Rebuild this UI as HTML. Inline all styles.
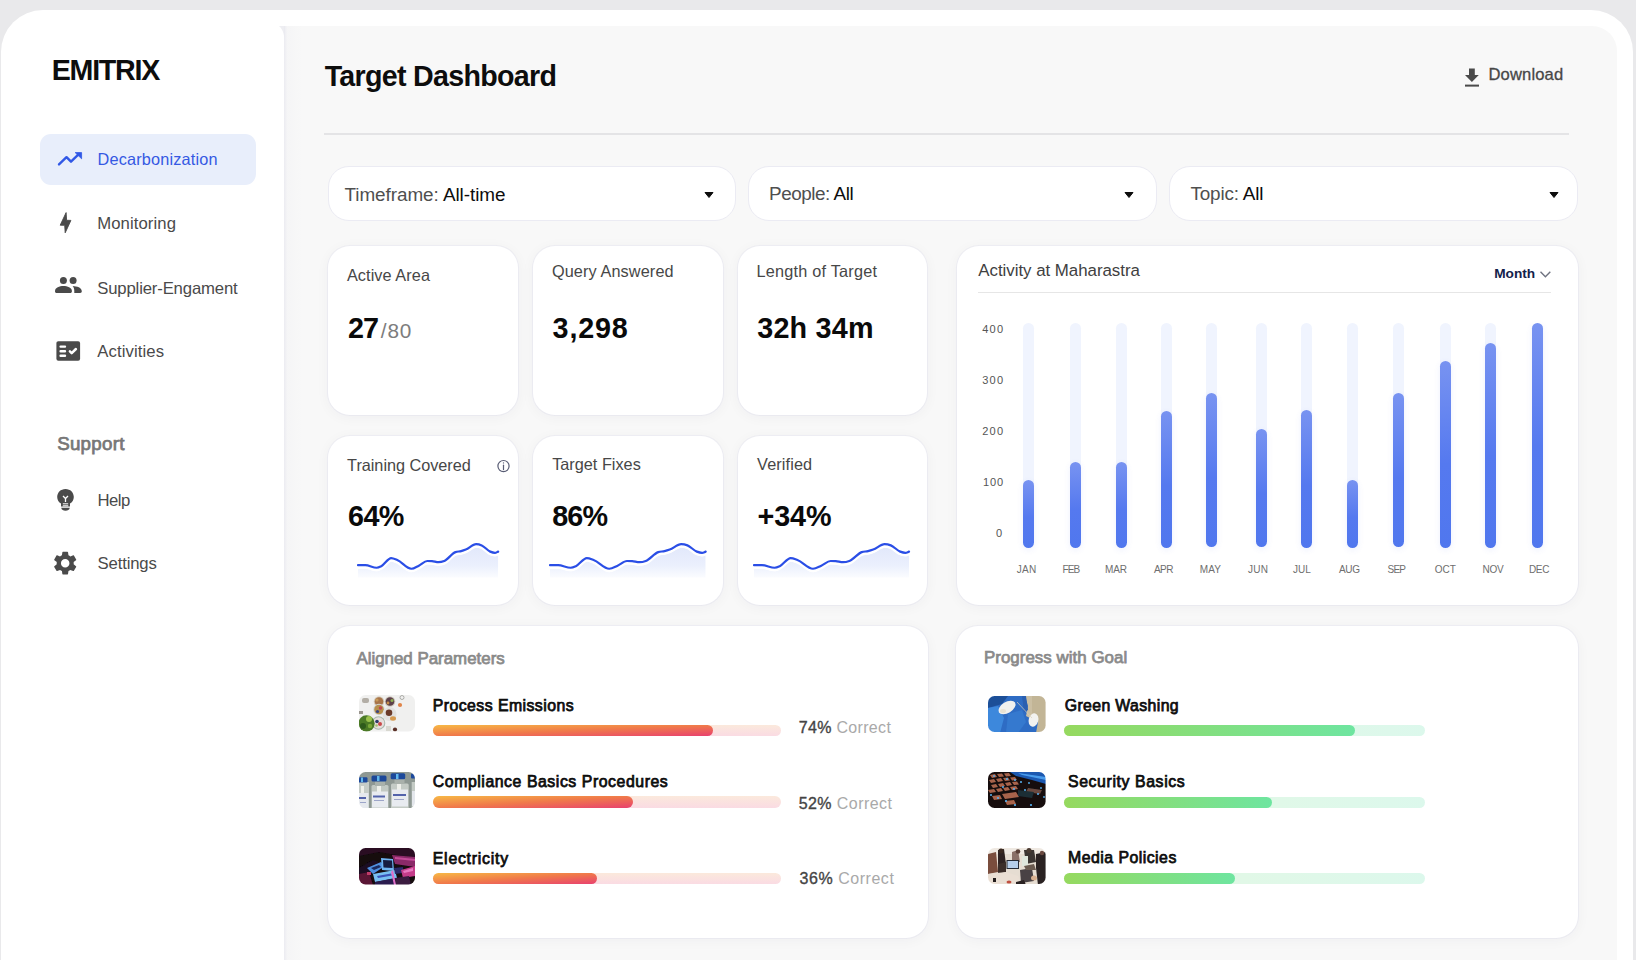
<!DOCTYPE html>
<html><head><meta charset="utf-8"><title>Target Dashboard</title>
<style>
html,body{margin:0;padding:0;}
body{width:1636px;height:960px;overflow:hidden;position:relative;background:#e9e9eb;font-family:"Liberation Sans",sans-serif;}
.t{position:absolute;white-space:nowrap;}
.b{position:absolute;}
.i{position:absolute;display:block;}
</style></head><body>
<div class="b" style="left:1px;top:10px;width:1632px;height:990px;background:#fff;border-radius:42px 42px 0 0;"></div>
<div class="b" style="left:284px;top:26px;width:1333px;height:974px;background:#f8f8f8;border-radius:0 25px 0 0;"></div>
<svg class="i" style="left:276px;top:26px" width="10" height="16" viewBox="276 26 10 16"><path d="M278.8 26 H284.5 V41 C284.3 34 282.5 28.5 278.8 26 Z" fill="#eeeef2"/></svg>
<div class="b" style="left:284px;top:26px;width:18px;height:974px;background:linear-gradient(90deg,rgba(230,230,238,0.7),rgba(240,240,243,0.35) 18%,rgba(248,248,248,0));"></div>
<div class="t" style="left:51.70px;top:54px;font-size:28.63px;line-height:32px;font-weight:700;color:#0d0d0d;letter-spacing:-1.250px;">EMITRIX</div>
<div class="b" style="left:40px;top:134px;width:216px;height:51px;background:#e8eefb;border-radius:11px;"></div>
<div class="t" style="left:97.50px;top:150px;font-size:16.28px;line-height:18px;font-weight:400;color:#3559e3;letter-spacing:0.179px;">Decarbonization</div>
<div class="t" style="left:97.20px;top:214px;font-size:16.72px;line-height:19px;font-weight:400;color:#4a4a4a;letter-spacing:0.083px;">Monitoring</div>
<div class="t" style="left:97.20px;top:279px;font-size:16.72px;line-height:19px;font-weight:400;color:#4a4a4a;letter-spacing:-0.156px;">Supplier-Engament</div>
<div class="t" style="left:97.20px;top:342px;font-size:16.72px;line-height:19px;font-weight:400;color:#4a4a4a;letter-spacing:0.111px;">Activities</div>
<div class="t" style="left:57.20px;top:433px;font-size:18.75px;line-height:21px;font-weight:400;color:#777777;letter-spacing:0.250px;-webkit-text-stroke:0.75px #777777;">Support</div>
<div class="t" style="left:97.50px;top:491px;font-size:16.72px;line-height:19px;font-weight:400;color:#4a4a4a;letter-spacing:-0.500px;">Help</div>
<div class="t" style="left:97.50px;top:554px;font-size:16.72px;line-height:19px;font-weight:400;color:#4a4a4a;letter-spacing:-0.143px;">Settings</div>
<svg class="i" style="left:50px;top:140px" width="40" height="40" viewBox="50 140 40 40"><path d="M59 164.4 L66.5 157.2 L71 161.7 L79 153.9" stroke="#3158e6" stroke-width="2.4" fill="none" stroke-linecap="round" stroke-linejoin="round"/><path d="M75.2 152.6 H81.6 V158.8 Z" fill="#3158e6" stroke="#3158e6" stroke-width="0.8" stroke-linejoin="round"/></svg>
<svg class="i" style="left:54px;top:208px" width="24" height="30" viewBox="54 208 24 30"><path d="M66.1 212.6 L66.6 220.3 L70.9 220.4 L65.2 232.8 L64.7 225.3 L60.2 225.2 Z" fill="#4a4a4a" stroke="#4a4a4a" stroke-width="0.9" stroke-linejoin="round"/></svg>
<svg class="i" style="left:52px;top:272px" width="34" height="26" viewBox="52 272 34 26"><circle cx="63.4" cy="280.4" r="3.5" fill="#4a4a4a"/><circle cx="73.1" cy="280.4" r="3.5" fill="#4a4a4a"/><path d="M55 291 C55 287.8 59.5 286.1 63.4 286.1 C67.3 286.1 71.9 287.8 71.9 291 V291.4 C71.9 292.3 71.2 292.9 70.3 292.9 H56.6 C55.7 292.9 55 292.3 55 291.4 Z" fill="#4a4a4a"/><path d="M72.6 286.1 C77 286.3 81.8 287.8 81.8 291.2 C81.8 292.2 81.2 292.9 80.2 292.9 H74.3 V291 C74.3 289 73.8 287.3 72.6 286.1 Z" fill="#4a4a4a"/></svg>
<svg class="i" style="left:52px;top:336px" width="34" height="30" viewBox="52 336 34 30"><rect x="56.4" y="341.2" width="23.7" height="19.5" rx="1.9" fill="#4a4a4a"/><path d="M60.6 346.6 H65 M60.6 351.2 H65 M60.6 355.7 H65" stroke="#fff" stroke-width="2.4" stroke-linecap="round"/><path d="M69.9 351.4 L71.7 353.1 L75.9 349" stroke="#fff" stroke-width="2.5" fill="none" stroke-linecap="round" stroke-linejoin="round"/></svg>
<svg class="i" style="left:56px;top:488px" width="19" height="24" viewBox="0 0 19 24"><path d="M9.5 1 C4.6 1 1.2 4.6 1.2 9 C1.2 12 2.8 14.3 5 15.6 V18.6 H14 V15.6 C16.2 14.3 17.8 12 17.8 9 C17.8 4.6 14.4 1 9.5 1 Z" fill="#4a4a4a"/><path d="M5.2 19.8 H13.8 C13.5 21.8 11.8 22.8 9.5 22.8 C7.2 22.8 5.5 21.8 5.2 19.8Z" fill="#4a4a4a"/><path d="M7 8 L9.5 10.5 L12 8 M9.5 10.5 V14" stroke="#fff" stroke-width="1.3" fill="none"/><rect x="6.8" y="15.3" width="5.4" height="1" fill="#fff"/><rect x="6.8" y="17.3" width="5.4" height="1" fill="#fff"/></svg>
<svg class="i" style="left:51.3px;top:549px" width="28.4" height="28.4" viewBox="0 0 24 24"><path fill="#4a4a4a" d="M19.14 12.94c.04-.3.06-.61.06-.94 0-.32-.02-.64-.07-.94l2.03-1.58a.49.49 0 0 0 .12-.61l-1.92-3.32a.488.488 0 0 0-.59-.22l-2.39.96c-.5-.38-1.03-.7-1.62-.94l-.36-2.54a.484.484 0 0 0-.48-.41h-3.84c-.24 0-.43.17-.47.41l-.36 2.54c-.59.24-1.13.57-1.62.94l-2.39-.96c-.22-.08-.47 0-.59.22L2.74 8.87c-.12.21-.08.47.12.61l2.03 1.58c-.05.3-.09.63-.09.94s.02.64.07.94l-2.03 1.58a.49.49 0 0 0-.12.61l1.92 3.32c.12.22.37.29.59.22l2.39-.96c.5.38 1.03.7 1.62.94l.36 2.54c.05.24.24.41.48.41h3.84c.24 0 .44-.17.47-.41l.36-2.54c.59-.24 1.13-.56 1.62-.94l2.39.96c.22.08.47 0 .59-.22l1.92-3.32c.12-.22.07-.47-.12-.61l-2.01-1.58zM12 15.6c-1.98 0-3.6-1.62-3.6-3.6s1.62-3.6 3.6-3.6 3.6 1.62 3.6 3.6-1.62 3.6-3.6 3.6z"/></svg>
<div class="t" style="left:324.70px;top:60px;font-size:28.63px;line-height:32px;font-weight:700;color:#0d0d0d;letter-spacing:-0.700px;">Target Dashboard</div>
<svg class="i" style="left:1463px;top:67px" width="18" height="21" viewBox="0 0 18 21"><path d="M6 1.5 H11.8 V8 H15.8 L8.9 15 L2 8 H6 Z" fill="#4a4a4a"/><rect x="2" y="17.6" width="14" height="2" fill="#4a4a4a"/></svg>
<div class="t" style="left:1488.50px;top:65px;font-size:16.57px;line-height:19px;font-weight:400;color:#474747;letter-spacing:0.136px;-webkit-text-stroke:0.3px #474747;">Download</div>
<div class="b" style="left:324px;top:133px;width:1245px;height:2px;background:#e4e4e6;"></div>
<div class="b" style="left:327.5px;top:166.4px;width:408.5px;height:54.19999999999999px;background:#fff;border:1px solid #ebebf3;border-radius:21px;box-sizing:border-box;"></div>
<div class="b" style="left:748.3px;top:166.4px;width:408.5px;height:54.19999999999999px;background:#fff;border:1px solid #ebebf3;border-radius:21px;box-sizing:border-box;"></div>
<div class="b" style="left:1169.4px;top:166.4px;width:408.5999999999999px;height:54.19999999999999px;background:#fff;border:1px solid #ebebf3;border-radius:21px;box-sizing:border-box;"></div>
<div class="t" style="left:344.50px;top:184px;font-size:18.90px;line-height:21px;letter-spacing:-0.056px"><span style="color:#4f4f4f;font-weight:400">Timeframe: </span><span style="color:#0d0d0d;font-weight:400">All-time</span></div>
<div class="t" style="left:769.10px;top:183px;font-size:18.90px;line-height:21px;letter-spacing:-0.475px"><span style="color:#4f4f4f;font-weight:400">People: </span><span style="color:#0d0d0d;font-weight:400">All</span></div>
<div class="t" style="left:1190.50px;top:183px;font-size:18.90px;line-height:21px;letter-spacing:-0.189px"><span style="color:#4f4f4f;font-weight:400">Topic: </span><span style="color:#0d0d0d;font-weight:400">All</span></div>
<svg class="i" style="left:704px;top:191px" width="10" height="8" viewBox="0 0 10 8"><path d="M1 1.5 H9 L5 6.5 Z" fill="#0d0d0d" stroke="#0d0d0d" stroke-width="1" stroke-linejoin="round"/></svg>
<svg class="i" style="left:1124.2px;top:191px" width="10" height="8" viewBox="0 0 10 8"><path d="M1 1.5 H9 L5 6.5 Z" fill="#0d0d0d" stroke="#0d0d0d" stroke-width="1" stroke-linejoin="round"/></svg>
<svg class="i" style="left:1549.3px;top:191px" width="10" height="8" viewBox="0 0 10 8"><path d="M1 1.5 H9 L5 6.5 Z" fill="#0d0d0d" stroke="#0d0d0d" stroke-width="1" stroke-linejoin="round"/></svg>
<div class="b" style="left:328px;top:246px;width:190px;height:168.5px;background:#fff;border-radius:22px;box-shadow:0 2px 14px rgba(30,30,60,0.045),0 0 0 1px rgba(225,225,240,0.38);"></div>
<div class="b" style="left:328px;top:436px;width:190px;height:168.5px;background:#fff;border-radius:22px;box-shadow:0 2px 14px rgba(30,30,60,0.045),0 0 0 1px rgba(225,225,240,0.38);"></div>
<div class="b" style="left:533px;top:246px;width:190px;height:168.5px;background:#fff;border-radius:22px;box-shadow:0 2px 14px rgba(30,30,60,0.045),0 0 0 1px rgba(225,225,240,0.38);"></div>
<div class="b" style="left:533px;top:436px;width:190px;height:168.5px;background:#fff;border-radius:22px;box-shadow:0 2px 14px rgba(30,30,60,0.045),0 0 0 1px rgba(225,225,240,0.38);"></div>
<div class="b" style="left:738px;top:246px;width:189px;height:168.5px;background:#fff;border-radius:22px;box-shadow:0 2px 14px rgba(30,30,60,0.045),0 0 0 1px rgba(225,225,240,0.38);"></div>
<div class="b" style="left:738px;top:436px;width:189px;height:168.5px;background:#fff;border-radius:22px;box-shadow:0 2px 14px rgba(30,30,60,0.045),0 0 0 1px rgba(225,225,240,0.38);"></div>
<div class="b" style="left:957px;top:246px;width:621px;height:358.5px;background:#fff;border-radius:22px;box-shadow:0 2px 14px rgba(30,30,60,0.045),0 0 0 1px rgba(225,225,240,0.38);"></div>
<div class="b" style="left:328px;top:626px;width:600px;height:312px;background:#fff;border-radius:22px;box-shadow:0 2px 14px rgba(30,30,60,0.045),0 0 0 1px rgba(225,225,240,0.38);"></div>
<div class="b" style="left:956px;top:626px;width:622px;height:312px;background:#fff;border-radius:22px;box-shadow:0 2px 14px rgba(30,30,60,0.045),0 0 0 1px rgba(225,225,240,0.38);"></div>
<div class="t" style="left:346.90px;top:266px;font-size:16.28px;line-height:18px;font-weight:400;color:#474747;letter-spacing:0.080px;">Active Area</div>
<div class="t" style="left:551.90px;top:262px;font-size:16.28px;line-height:18px;font-weight:400;color:#474747;letter-spacing:0.112px;">Query Answered</div>
<div class="t" style="left:756.40px;top:262px;font-size:16.28px;line-height:18px;font-weight:400;color:#474747;letter-spacing:0.223px;">Length of Target</div>
<div class="t" style="left:348.10px;top:312px;font-size:28.78px;line-height:32px;font-weight:700;color:#0a0a0a;letter-spacing:-1.000px;">27</div>
<div class="t" style="left:380.70px;top:319px;font-size:20.79px;line-height:23px;font-weight:400;color:#7d7d7d;letter-spacing:0.925px;">/80</div>
<div class="t" style="left:552.60px;top:312px;font-size:28.78px;line-height:32px;font-weight:700;color:#0a0a0a;letter-spacing:0.800px;">3,298</div>
<div class="t" style="left:757.20px;top:312px;font-size:28.78px;line-height:32px;font-weight:700;color:#0a0a0a;letter-spacing:0.200px;">32h 34m</div>
<div class="t" style="left:347.10px;top:456px;font-size:16.28px;line-height:18px;font-weight:400;color:#474747;letter-spacing:-0.033px;">Training Covered</div>
<div class="t" style="left:552.20px;top:455px;font-size:16.28px;line-height:18px;font-weight:400;color:#474747;letter-spacing:0.000px;">Target Fixes</div>
<div class="t" style="left:757.10px;top:455px;font-size:16.28px;line-height:18px;font-weight:400;color:#474747;letter-spacing:0.107px;">Verified</div>
<div class="t" style="left:348.10px;top:500px;font-size:28.78px;line-height:32px;font-weight:700;color:#0a0a0a;letter-spacing:-0.700px;">64%</div>
<div class="t" style="left:552.20px;top:500px;font-size:28.78px;line-height:32px;font-weight:700;color:#0a0a0a;letter-spacing:-0.850px;">86%</div>
<div class="t" style="left:757.60px;top:500px;font-size:28.78px;line-height:32px;font-weight:700;color:#0a0a0a;letter-spacing:-0.150px;">+34%</div>
<svg class="i" style="left:490px;top:452px" width="26" height="26" viewBox="490 452 26 26"><circle cx="503.5" cy="466.1" r="5.6" stroke="#585c74" stroke-width="1.2" fill="none"/><path d="M503.5 465.2 V469.6" stroke="#585c74" stroke-width="1.2" stroke-linecap="round"/><circle cx="503.5" cy="462.9" r="0.7" fill="#585c74"/></svg>
<svg class="i" style="left:357.5px;top:530px;overflow:visible" width="140.2" height="50" viewBox="0 0 155.13 50" preserveAspectRatio="none"><defs><linearGradient id="sg357" gradientUnits="userSpaceOnUse" x1="0" y1="14" x2="0" y2="47"><stop offset="0" stop-color="#e2e8fb"/><stop offset="0.55" stop-color="#ebf0fd"/><stop offset="1" stop-color="#ffffff"/></linearGradient><clipPath id="cpsg357"><rect x="0" y="0" width="155.13" height="47.5"/></clipPath></defs><g clip-path="url(#cpsg357)"><path d="M0.00 35.13 C2.70 35.13 5.40 35.13 8.10 35.13 C12.26 35.13 16.42 37.73 20.57 37.73 C22.31 37.73 24.04 36.94 25.77 36.17 C29.41 34.56 33.04 28.07 36.68 28.07 C38.93 28.07 41.18 29.12 43.43 29.94 C48.63 31.83 53.82 38.77 59.02 38.77 C61.79 38.77 64.56 36.85 67.33 35.65 C70.45 34.30 73.57 30.98 76.68 30.98 C78.42 30.98 80.15 31.05 81.88 31.18 C84.30 31.38 86.73 32.22 89.15 32.22 C91.23 32.22 93.31 31.74 95.39 30.98 C99.54 29.44 103.70 23.53 107.86 22.14 C109.93 21.45 112.01 21.60 114.09 21.11 C115.82 20.69 117.55 20.16 119.29 19.55 C123.10 18.20 126.90 14.14 130.71 14.14 C132.79 14.14 134.87 14.59 136.95 15.39 C140.07 16.60 143.18 20.40 146.30 21.63 C148.03 22.30 149.76 22.87 151.50 22.87 C152.71 22.87 153.92 22.04 155.13 21.63 L155.13 60 L0 60 Z" fill="url(#sg357)" transform="translate(0,3.5)"/></g><path d="M0.00 35.13 C2.70 35.13 5.40 35.13 8.10 35.13 C12.26 35.13 16.42 37.73 20.57 37.73 C22.31 37.73 24.04 36.94 25.77 36.17 C29.41 34.56 33.04 28.07 36.68 28.07 C38.93 28.07 41.18 29.12 43.43 29.94 C48.63 31.83 53.82 38.77 59.02 38.77 C61.79 38.77 64.56 36.85 67.33 35.65 C70.45 34.30 73.57 30.98 76.68 30.98 C78.42 30.98 80.15 31.05 81.88 31.18 C84.30 31.38 86.73 32.22 89.15 32.22 C91.23 32.22 93.31 31.74 95.39 30.98 C99.54 29.44 103.70 23.53 107.86 22.14 C109.93 21.45 112.01 21.60 114.09 21.11 C115.82 20.69 117.55 20.16 119.29 19.55 C123.10 18.20 126.90 14.14 130.71 14.14 C132.79 14.14 134.87 14.59 136.95 15.39 C140.07 16.60 143.18 20.40 146.30 21.63 C148.03 22.30 149.76 22.87 151.50 22.87 C152.71 22.87 153.92 22.04 155.13 21.63" stroke="#fff" stroke-width="4.2" fill="none" transform="translate(0,1.5)" vector-effect="non-scaling-stroke"/><path d="M0.00 35.13 C2.70 35.13 5.40 35.13 8.10 35.13 C12.26 35.13 16.42 37.73 20.57 37.73 C22.31 37.73 24.04 36.94 25.77 36.17 C29.41 34.56 33.04 28.07 36.68 28.07 C38.93 28.07 41.18 29.12 43.43 29.94 C48.63 31.83 53.82 38.77 59.02 38.77 C61.79 38.77 64.56 36.85 67.33 35.65 C70.45 34.30 73.57 30.98 76.68 30.98 C78.42 30.98 80.15 31.05 81.88 31.18 C84.30 31.38 86.73 32.22 89.15 32.22 C91.23 32.22 93.31 31.74 95.39 30.98 C99.54 29.44 103.70 23.53 107.86 22.14 C109.93 21.45 112.01 21.60 114.09 21.11 C115.82 20.69 117.55 20.16 119.29 19.55 C123.10 18.20 126.90 14.14 130.71 14.14 C132.79 14.14 134.87 14.59 136.95 15.39 C140.07 16.60 143.18 20.40 146.30 21.63 C148.03 22.30 149.76 22.87 151.50 22.87 C152.71 22.87 153.92 22.04 155.13 21.63" stroke="#2a4ee6" stroke-width="2.2" fill="none" stroke-linecap="round" vector-effect="non-scaling-stroke"/></svg>
<svg class="i" style="left:550px;top:530px;overflow:visible" width="155.7" height="50" viewBox="0 0 155.13 50" preserveAspectRatio="none"><defs><linearGradient id="sg550" gradientUnits="userSpaceOnUse" x1="0" y1="14" x2="0" y2="47"><stop offset="0" stop-color="#e2e8fb"/><stop offset="0.55" stop-color="#ebf0fd"/><stop offset="1" stop-color="#ffffff"/></linearGradient><clipPath id="cpsg550"><rect x="0" y="0" width="155.13" height="47.5"/></clipPath></defs><g clip-path="url(#cpsg550)"><path d="M0.00 35.13 C2.70 35.13 5.40 35.13 8.10 35.13 C12.26 35.13 16.42 37.73 20.57 37.73 C22.31 37.73 24.04 36.94 25.77 36.17 C29.41 34.56 33.04 28.07 36.68 28.07 C38.93 28.07 41.18 29.12 43.43 29.94 C48.63 31.83 53.82 38.77 59.02 38.77 C61.79 38.77 64.56 36.85 67.33 35.65 C70.45 34.30 73.57 30.98 76.68 30.98 C78.42 30.98 80.15 31.05 81.88 31.18 C84.30 31.38 86.73 32.22 89.15 32.22 C91.23 32.22 93.31 31.74 95.39 30.98 C99.54 29.44 103.70 23.53 107.86 22.14 C109.93 21.45 112.01 21.60 114.09 21.11 C115.82 20.69 117.55 20.16 119.29 19.55 C123.10 18.20 126.90 14.14 130.71 14.14 C132.79 14.14 134.87 14.59 136.95 15.39 C140.07 16.60 143.18 20.40 146.30 21.63 C148.03 22.30 149.76 22.87 151.50 22.87 C152.71 22.87 153.92 22.04 155.13 21.63 L155.13 60 L0 60 Z" fill="url(#sg550)" transform="translate(0,3.5)"/></g><path d="M0.00 35.13 C2.70 35.13 5.40 35.13 8.10 35.13 C12.26 35.13 16.42 37.73 20.57 37.73 C22.31 37.73 24.04 36.94 25.77 36.17 C29.41 34.56 33.04 28.07 36.68 28.07 C38.93 28.07 41.18 29.12 43.43 29.94 C48.63 31.83 53.82 38.77 59.02 38.77 C61.79 38.77 64.56 36.85 67.33 35.65 C70.45 34.30 73.57 30.98 76.68 30.98 C78.42 30.98 80.15 31.05 81.88 31.18 C84.30 31.38 86.73 32.22 89.15 32.22 C91.23 32.22 93.31 31.74 95.39 30.98 C99.54 29.44 103.70 23.53 107.86 22.14 C109.93 21.45 112.01 21.60 114.09 21.11 C115.82 20.69 117.55 20.16 119.29 19.55 C123.10 18.20 126.90 14.14 130.71 14.14 C132.79 14.14 134.87 14.59 136.95 15.39 C140.07 16.60 143.18 20.40 146.30 21.63 C148.03 22.30 149.76 22.87 151.50 22.87 C152.71 22.87 153.92 22.04 155.13 21.63" stroke="#fff" stroke-width="4.2" fill="none" transform="translate(0,1.5)" vector-effect="non-scaling-stroke"/><path d="M0.00 35.13 C2.70 35.13 5.40 35.13 8.10 35.13 C12.26 35.13 16.42 37.73 20.57 37.73 C22.31 37.73 24.04 36.94 25.77 36.17 C29.41 34.56 33.04 28.07 36.68 28.07 C38.93 28.07 41.18 29.12 43.43 29.94 C48.63 31.83 53.82 38.77 59.02 38.77 C61.79 38.77 64.56 36.85 67.33 35.65 C70.45 34.30 73.57 30.98 76.68 30.98 C78.42 30.98 80.15 31.05 81.88 31.18 C84.30 31.38 86.73 32.22 89.15 32.22 C91.23 32.22 93.31 31.74 95.39 30.98 C99.54 29.44 103.70 23.53 107.86 22.14 C109.93 21.45 112.01 21.60 114.09 21.11 C115.82 20.69 117.55 20.16 119.29 19.55 C123.10 18.20 126.90 14.14 130.71 14.14 C132.79 14.14 134.87 14.59 136.95 15.39 C140.07 16.60 143.18 20.40 146.30 21.63 C148.03 22.30 149.76 22.87 151.50 22.87 C152.71 22.87 153.92 22.04 155.13 21.63" stroke="#2a4ee6" stroke-width="2.2" fill="none" stroke-linecap="round" vector-effect="non-scaling-stroke"/></svg>
<svg class="i" style="left:754px;top:530px;overflow:visible" width="155" height="50" viewBox="0 0 155.13 50" preserveAspectRatio="none"><defs><linearGradient id="sg754" gradientUnits="userSpaceOnUse" x1="0" y1="14" x2="0" y2="47"><stop offset="0" stop-color="#e2e8fb"/><stop offset="0.55" stop-color="#ebf0fd"/><stop offset="1" stop-color="#ffffff"/></linearGradient><clipPath id="cpsg754"><rect x="0" y="0" width="155.13" height="47.5"/></clipPath></defs><g clip-path="url(#cpsg754)"><path d="M0.00 35.13 C2.70 35.13 5.40 35.13 8.10 35.13 C12.26 35.13 16.42 37.73 20.57 37.73 C22.31 37.73 24.04 36.94 25.77 36.17 C29.41 34.56 33.04 28.07 36.68 28.07 C38.93 28.07 41.18 29.12 43.43 29.94 C48.63 31.83 53.82 38.77 59.02 38.77 C61.79 38.77 64.56 36.85 67.33 35.65 C70.45 34.30 73.57 30.98 76.68 30.98 C78.42 30.98 80.15 31.05 81.88 31.18 C84.30 31.38 86.73 32.22 89.15 32.22 C91.23 32.22 93.31 31.74 95.39 30.98 C99.54 29.44 103.70 23.53 107.86 22.14 C109.93 21.45 112.01 21.60 114.09 21.11 C115.82 20.69 117.55 20.16 119.29 19.55 C123.10 18.20 126.90 14.14 130.71 14.14 C132.79 14.14 134.87 14.59 136.95 15.39 C140.07 16.60 143.18 20.40 146.30 21.63 C148.03 22.30 149.76 22.87 151.50 22.87 C152.71 22.87 153.92 22.04 155.13 21.63 L155.13 60 L0 60 Z" fill="url(#sg754)" transform="translate(0,3.5)"/></g><path d="M0.00 35.13 C2.70 35.13 5.40 35.13 8.10 35.13 C12.26 35.13 16.42 37.73 20.57 37.73 C22.31 37.73 24.04 36.94 25.77 36.17 C29.41 34.56 33.04 28.07 36.68 28.07 C38.93 28.07 41.18 29.12 43.43 29.94 C48.63 31.83 53.82 38.77 59.02 38.77 C61.79 38.77 64.56 36.85 67.33 35.65 C70.45 34.30 73.57 30.98 76.68 30.98 C78.42 30.98 80.15 31.05 81.88 31.18 C84.30 31.38 86.73 32.22 89.15 32.22 C91.23 32.22 93.31 31.74 95.39 30.98 C99.54 29.44 103.70 23.53 107.86 22.14 C109.93 21.45 112.01 21.60 114.09 21.11 C115.82 20.69 117.55 20.16 119.29 19.55 C123.10 18.20 126.90 14.14 130.71 14.14 C132.79 14.14 134.87 14.59 136.95 15.39 C140.07 16.60 143.18 20.40 146.30 21.63 C148.03 22.30 149.76 22.87 151.50 22.87 C152.71 22.87 153.92 22.04 155.13 21.63" stroke="#fff" stroke-width="4.2" fill="none" transform="translate(0,1.5)" vector-effect="non-scaling-stroke"/><path d="M0.00 35.13 C2.70 35.13 5.40 35.13 8.10 35.13 C12.26 35.13 16.42 37.73 20.57 37.73 C22.31 37.73 24.04 36.94 25.77 36.17 C29.41 34.56 33.04 28.07 36.68 28.07 C38.93 28.07 41.18 29.12 43.43 29.94 C48.63 31.83 53.82 38.77 59.02 38.77 C61.79 38.77 64.56 36.85 67.33 35.65 C70.45 34.30 73.57 30.98 76.68 30.98 C78.42 30.98 80.15 31.05 81.88 31.18 C84.30 31.38 86.73 32.22 89.15 32.22 C91.23 32.22 93.31 31.74 95.39 30.98 C99.54 29.44 103.70 23.53 107.86 22.14 C109.93 21.45 112.01 21.60 114.09 21.11 C115.82 20.69 117.55 20.16 119.29 19.55 C123.10 18.20 126.90 14.14 130.71 14.14 C132.79 14.14 134.87 14.59 136.95 15.39 C140.07 16.60 143.18 20.40 146.30 21.63 C148.03 22.30 149.76 22.87 151.50 22.87 C152.71 22.87 153.92 22.04 155.13 21.63" stroke="#2a4ee6" stroke-width="2.2" fill="none" stroke-linecap="round" vector-effect="non-scaling-stroke"/></svg>
<div class="t" style="left:978.30px;top:261px;font-size:16.86px;line-height:19px;font-weight:400;color:#404040;letter-spacing:-0.026px;">Activity at Maharastra</div>
<div class="t" style="left:1494.30px;top:266px;font-size:13.66px;line-height:15px;font-weight:700;color:#13214a;letter-spacing:-0.062px;">Month</div>
<svg class="i" style="left:1538px;top:269px" width="15" height="11" viewBox="0 0 15 11"><path d="M2.5 2.8 L7.4 7.8 L12.3 2.8" stroke="#6f7380" stroke-width="1.4" fill="none"/></svg>
<div class="b" style="left:978px;top:292px;width:573px;height:1px;background:#e6e6e6;"></div>
<div class="t" style="left:982.20px;top:323px;font-size:11.05px;line-height:12px;font-weight:400;color:#555;letter-spacing:1.275px;">400</div>
<div class="t" style="left:982.20px;top:374px;font-size:11.05px;line-height:12px;font-weight:400;color:#555;letter-spacing:1.275px;">300</div>
<div class="t" style="left:982.20px;top:425px;font-size:11.05px;line-height:12px;font-weight:400;color:#555;letter-spacing:1.275px;">200</div>
<div class="t" style="left:983.00px;top:476px;font-size:11.05px;line-height:12px;font-weight:400;color:#555;letter-spacing:0.875px;">100</div>
<div class="t" style="left:996.00px;top:527px;font-size:11.05px;line-height:12px;font-weight:400;color:#555;letter-spacing:0.000px;">0</div>
<div class="b" style="left:1022.7px;top:322.8px;width:11.0px;height:224.7px;background:#f0f4fe;border-radius:6px;"></div>
<div class="b" style="left:1022.7px;top:480px;width:11.0px;height:67.5px;background:linear-gradient(180deg,#7893f1 0%,#5579ef 55%,#5077ee 100%);border-radius:6px;box-shadow:0 2px 6px rgba(74,111,233,0.10);"></div>
<div class="b" style="left:1069.7px;top:322.8px;width:11.0px;height:224.7px;background:#f0f4fe;border-radius:6px;"></div>
<div class="b" style="left:1069.7px;top:462px;width:11.0px;height:85.5px;background:linear-gradient(180deg,#7893f1 0%,#5579ef 55%,#5077ee 100%);border-radius:6px;box-shadow:0 2px 6px rgba(74,111,233,0.10);"></div>
<div class="b" style="left:1115.5px;top:322.8px;width:11.0px;height:224.7px;background:#f0f4fe;border-radius:6px;"></div>
<div class="b" style="left:1115.5px;top:462px;width:11.0px;height:85.5px;background:linear-gradient(180deg,#7893f1 0%,#5579ef 55%,#5077ee 100%);border-radius:6px;box-shadow:0 2px 6px rgba(74,111,233,0.10);"></div>
<div class="b" style="left:1160.5px;top:322.8px;width:11.0px;height:224.7px;background:#f0f4fe;border-radius:6px;"></div>
<div class="b" style="left:1160.5px;top:411px;width:11.0px;height:136.5px;background:linear-gradient(180deg,#7893f1 0%,#5579ef 55%,#5077ee 100%);border-radius:6px;box-shadow:0 2px 6px rgba(74,111,233,0.10);"></div>
<div class="b" style="left:1206.2px;top:322.8px;width:11.0px;height:224.7px;background:#f0f4fe;border-radius:6px;"></div>
<div class="b" style="left:1206.2px;top:392.6px;width:11.0px;height:154.89999999999998px;background:linear-gradient(180deg,#7893f1 0%,#5579ef 55%,#5077ee 100%);border-radius:6px;box-shadow:0 2px 6px rgba(74,111,233,0.10);"></div>
<div class="b" style="left:1255.5px;top:322.8px;width:11.0px;height:224.7px;background:#f0f4fe;border-radius:6px;"></div>
<div class="b" style="left:1255.5px;top:428.6px;width:11.0px;height:118.89999999999998px;background:linear-gradient(180deg,#7893f1 0%,#5579ef 55%,#5077ee 100%);border-radius:6px;box-shadow:0 2px 6px rgba(74,111,233,0.10);"></div>
<div class="b" style="left:1300.5px;top:322.8px;width:11.0px;height:224.7px;background:#f0f4fe;border-radius:6px;"></div>
<div class="b" style="left:1300.5px;top:410px;width:11.0px;height:137.5px;background:linear-gradient(180deg,#7893f1 0%,#5579ef 55%,#5077ee 100%);border-radius:6px;box-shadow:0 2px 6px rgba(74,111,233,0.10);"></div>
<div class="b" style="left:1346.5px;top:322.8px;width:11.0px;height:224.7px;background:#f0f4fe;border-radius:6px;"></div>
<div class="b" style="left:1346.5px;top:480px;width:11.0px;height:67.5px;background:linear-gradient(180deg,#7893f1 0%,#5579ef 55%,#5077ee 100%);border-radius:6px;box-shadow:0 2px 6px rgba(74,111,233,0.10);"></div>
<div class="b" style="left:1392.5px;top:322.8px;width:11.0px;height:224.7px;background:#f0f4fe;border-radius:6px;"></div>
<div class="b" style="left:1392.5px;top:392.6px;width:11.0px;height:154.89999999999998px;background:linear-gradient(180deg,#7893f1 0%,#5579ef 55%,#5077ee 100%);border-radius:6px;box-shadow:0 2px 6px rgba(74,111,233,0.10);"></div>
<div class="b" style="left:1439.5px;top:322.8px;width:11.0px;height:224.7px;background:#f0f4fe;border-radius:6px;"></div>
<div class="b" style="left:1439.5px;top:361px;width:11.0px;height:186.5px;background:linear-gradient(180deg,#7893f1 0%,#5579ef 55%,#5077ee 100%);border-radius:6px;box-shadow:0 2px 6px rgba(74,111,233,0.10);"></div>
<div class="b" style="left:1484.5px;top:322.8px;width:11.0px;height:224.7px;background:#f0f4fe;border-radius:6px;"></div>
<div class="b" style="left:1484.5px;top:343px;width:11.0px;height:204.5px;background:linear-gradient(180deg,#7893f1 0%,#5579ef 55%,#5077ee 100%);border-radius:6px;box-shadow:0 2px 6px rgba(74,111,233,0.10);"></div>
<div class="b" style="left:1531.5px;top:322.8px;width:11.0px;height:224.7px;background:#f0f4fe;border-radius:6px;"></div>
<div class="b" style="left:1531.5px;top:323px;width:11.0px;height:224.5px;background:linear-gradient(180deg,#7893f1 0%,#5579ef 55%,#5077ee 100%);border-radius:6px;box-shadow:0 2px 6px rgba(74,111,233,0.10);"></div>
<div class="t" style="left:1016.70px;top:564px;font-size:10.03px;line-height:11px;font-weight:400;color:#6e6e6e;letter-spacing:0.300px;">JAN</div>
<div class="t" style="left:1062.60px;top:564px;font-size:10.03px;line-height:11px;font-weight:400;color:#6e6e6e;letter-spacing:-0.900px;">FEB</div>
<div class="t" style="left:1105.10px;top:564px;font-size:10.03px;line-height:11px;font-weight:400;color:#6e6e6e;letter-spacing:-0.125px;">MAR</div>
<div class="t" style="left:1154.00px;top:564px;font-size:10.03px;line-height:11px;font-weight:400;color:#6e6e6e;letter-spacing:-0.600px;">APR</div>
<div class="t" style="left:1199.80px;top:564px;font-size:10.03px;line-height:11px;font-weight:400;color:#6e6e6e;letter-spacing:0.050px;">MAY</div>
<div class="t" style="left:1248.00px;top:564px;font-size:10.03px;line-height:11px;font-weight:400;color:#6e6e6e;letter-spacing:0.250px;">JUN</div>
<div class="t" style="left:1292.90px;top:564px;font-size:10.03px;line-height:11px;font-weight:400;color:#6e6e6e;letter-spacing:0.075px;">JUL</div>
<div class="t" style="left:1338.90px;top:564px;font-size:10.03px;line-height:11px;font-weight:400;color:#6e6e6e;letter-spacing:-0.225px;">AUG</div>
<div class="t" style="left:1387.60px;top:564px;font-size:10.03px;line-height:11px;font-weight:400;color:#6e6e6e;letter-spacing:-0.850px;">SEP</div>
<div class="t" style="left:1434.80px;top:564px;font-size:10.03px;line-height:11px;font-weight:400;color:#6e6e6e;letter-spacing:0.000px;">OCT</div>
<div class="t" style="left:1482.40px;top:564px;font-size:10.03px;line-height:11px;font-weight:400;color:#6e6e6e;letter-spacing:-0.225px;">NOV</div>
<div class="t" style="left:1528.90px;top:564px;font-size:10.03px;line-height:11px;font-weight:400;color:#6e6e6e;letter-spacing:-0.300px;">DEC</div>
<div class="t" style="left:356.40px;top:649px;font-size:16.86px;line-height:19px;font-weight:400;color:#8a8a8a;letter-spacing:0.015px;-webkit-text-stroke:0.75px #8a8a8a;">Aligned Parameters</div>
<div class="t" style="left:984.00px;top:648px;font-size:16.86px;line-height:19px;font-weight:400;color:#8a8a8a;letter-spacing:0.044px;-webkit-text-stroke:0.75px #8a8a8a;">Progress with Goal</div>
<svg class="i" style="left:358.6px;top:695.2px" width="56" height="36.5" viewBox="0 0 56 36.5" preserveAspectRatio="none"><defs><clipPath id="cfood"><rect width="56" height="36.5" rx="6.5"/></clipPath><filter id="ffood" x="-5%" y="-5%" width="110%" height="110%"><feGaussianBlur stdDeviation="0.6"/></filter></defs><g clip-path="url(#cfood)"><g filter="url(#ffood)"><rect width="56" height="37" fill="#f0f0ef"/>
<rect x="3" y="3" width="7" height="5" rx="2" fill="#b3aea6"/><rect x="0" y="16" width="4" height="3" fill="#9a958e"/>
<circle cx="20" cy="6.5" r="5.3" fill="#d6cdbf"/><circle cx="20" cy="6.5" r="4.3" fill="#a8744a"/><circle cx="18" cy="5" r="1.6" fill="#c79a5a"/>
<circle cx="31" cy="6.5" r="5.3" fill="#cfc8bd"/><circle cx="31" cy="6.5" r="4.3" fill="#5d4048"/><circle cx="33" cy="5.5" r="1.5" fill="#8db050"/><circle cx="29" cy="8" r="1.4" fill="#c9904a"/>
<circle cx="20" cy="14.5" r="5.8" fill="#d5d9db"/><circle cx="20" cy="14.5" r="4.8" fill="#b8904e"/><circle cx="21.5" cy="13" r="1.7" fill="#c04650"/><circle cx="18.5" cy="16.5" r="1.6" fill="#3a4680"/>
<circle cx="30.5" cy="19" r="7" fill="#e2e2e0"/><circle cx="30" cy="17.8" r="3.3" fill="#6b3a2a"/><ellipse cx="34" cy="23.5" rx="3" ry="2.2" fill="#d59a50"/>
<circle cx="41" cy="10" r="2.1" fill="#e08448"/><circle cx="43" cy="2.5" r="2" fill="none" stroke="#9a9a96" stroke-width=".8"/>
<circle cx="19.5" cy="28" r="6.8" fill="#a7b8ae"/><circle cx="19.5" cy="28" r="5.8" fill="#e7dfdc"/><circle cx="21" cy="29" r="2" fill="#c84848"/><circle cx="18" cy="26.5" r="1.8" fill="#2f3a6a"/><circle cx="17.5" cy="30.5" r="1.3" fill="#a8c070"/>
<circle cx="7.5" cy="28.5" r="8.2" fill="#4b7a28"/><circle cx="10" cy="24" r="3" fill="#9cc24e"/><circle cx="4" cy="31" r="3" fill="#2e5a1a"/><circle cx="11" cy="31" r="2.2" fill="#7aa838"/>
<circle cx="36" cy="34.5" r="2.1" fill="#5a2e26"/><rect x="27" y="31" width="5" height="5" fill="#d8d8d0"/></g></g></svg>
<div class="t" style="left:432.80px;top:697px;font-size:15.84px;line-height:17px;font-weight:400;color:#0d0d0d;letter-spacing:0.441px;-webkit-text-stroke:0.75px #0d0d0d;">Process Emissions</div>
<div class="b" style="left:432.5px;top:724.6px;width:348.29999999999995px;height:11.299999999999955px;background:linear-gradient(180deg,#fbe9dc,#fadbe3);border-radius:6px;"></div>
<div class="b" style="left:432.5px;top:724.6px;width:280.4px;height:11.299999999999955px;background:linear-gradient(to bottom right,#f7b945,#f07a4a 50%,#e8416f);border-radius:6px;"></div>
<div class="t" style="left:798.70px;top:719px;font-size:15.99px;line-height:17px;letter-spacing:0.330px"><span style="color:#444444;font-weight:400;-webkit-text-stroke:0.35px #444444">74% </span><span style="color:#a9a9a9;font-weight:400">Correct</span></div>
<svg class="i" style="left:358.6px;top:771.6px" width="56" height="36.5" viewBox="0 0 56 36.5" preserveAspectRatio="none"><defs><clipPath id="cvials"><rect width="56" height="36.5" rx="6.5"/></clipPath><filter id="fvials" x="-5%" y="-5%" width="110%" height="110%"><feGaussianBlur stdDeviation="0.6"/></filter></defs><g clip-path="url(#cvials)"><g filter="url(#fvials)"><rect width="56" height="37" fill="#8e9893"/>
<rect x="-2" y="10" width="12" height="28" fill="#c5ccc7"/><rect x="2" y="14" width="3" height="8" fill="#eef0ea"/>
<rect x="12.5" y="13" width="17" height="25" rx="1.5" fill="#c2c9c3"/><rect x="16" y="9" width="10" height="5" fill="#a9b1ab"/><rect x="18" y="14" width="4" height="6" fill="#eef0ea"/>
<rect x="32" y="11.5" width="17.7" height="26" rx="1.5" fill="#c4cbc5"/><rect x="35.5" y="7" width="10" height="5" fill="#a9b1ab"/><rect x="38" y="12" width="4" height="6" fill="#eef0ea"/>
<rect x="52.7" y="10" width="6" height="28" fill="#c4cbc5"/>
<rect x="-1" y="5.2" width="9.5" height="5.3" rx="1.2" fill="#1c4a9c"/><rect x="2" y="5.5" width="2" height="4.5" fill="#62b8ec"/>
<rect x="12.5" y="3.5" width="15" height="6" rx="1.5" fill="#1b4698"/><rect x="18" y="4" width="2.5" height="5" fill="#5fb6ea"/>
<rect x="31.7" y="1.3" width="14.5" height="6" rx="1.5" fill="#1c489b"/><rect x="37" y="2" width="2.5" height="5" fill="#62baee"/>
<rect x="52" y="1.5" width="6" height="5" rx="1" fill="#1c4a9c"/>
<rect x="0" y="21" width="9.5" height="15" fill="#e6e9ee"/><rect x="13" y="19.5" width="16" height="16" fill="#e8ebf0"/><rect x="33" y="17.5" width="16" height="17" fill="#e8ebf0"/><rect x="53" y="19" width="5" height="15" fill="#e4e7ec"/>
<rect x="0" y="25" width="7" height="2" fill="#5364ab"/><rect x="14" y="23.5" width="12" height="2" fill="#5364ab"/><rect x="34" y="22" width="13" height="2" fill="#5364ab"/>
<rect x="15" y="28" width="10" height=".8" fill="#8a94c0"/><rect x="35" y="27" width="10" height=".8" fill="#8a94c0"/><rect x="1" y="30" width="6" height=".8" fill="#8a94c0"/></g></g></svg>
<div class="t" style="left:432.80px;top:773px;font-size:15.84px;line-height:17px;font-weight:400;color:#0d0d0d;letter-spacing:0.556px;-webkit-text-stroke:0.75px #0d0d0d;">Compliance Basics Procedures</div>
<div class="b" style="left:432.5px;top:796.4px;width:348.29999999999995px;height:11.299999999999955px;background:linear-gradient(180deg,#fbe9dc,#fadbe3);border-radius:6px;"></div>
<div class="b" style="left:432.5px;top:796.4px;width:200.5px;height:11.299999999999955px;background:linear-gradient(to bottom right,#f7b945,#f07a4a 50%,#e8416f);border-radius:6px;"></div>
<div class="t" style="left:798.70px;top:795px;font-size:15.99px;line-height:17px;letter-spacing:0.430px"><span style="color:#444444;font-weight:400;-webkit-text-stroke:0.35px #444444">52% </span><span style="color:#a9a9a9;font-weight:400">Correct</span></div>
<svg class="i" style="left:358.6px;top:848px" width="56" height="36.5" viewBox="0 0 56 36.5" preserveAspectRatio="none"><defs><clipPath id="celec"><rect width="56" height="36.5" rx="6.5"/></clipPath><filter id="felec" x="-5%" y="-5%" width="110%" height="110%"><feGaussianBlur stdDeviation="0.6"/></filter></defs><g clip-path="url(#celec)"><g filter="url(#felec)"><rect width="56" height="37" fill="#12070f"/>
<path d="M0 0 H56 V10 L20 4 L0 8 Z" fill="#2a0a22"/><path d="M33 7 L56 9 V19 L36 16 Z" fill="#8a2a68"/><path d="M36 9 L56 11 V13 L36 11 Z" fill="#c44a98"/>
<path d="M0 20 L14 12 L20 14 L8 26 L0 30 Z" fill="#1a0d20"/>
<path d="M8 20 L22 14 L26 18 L14 26 Z" fill="#4f8fe0"/><path d="M12 20 L20 17 L22 19 L15 22 Z" fill="#1a2a60"/>
<path d="M22 10 L34 11 L35 23 L23 22 Z" fill="#6fb4f0"/><path d="M24 12 L33 12.5 L33.5 20 L24.5 19.5 Z" fill="#141a40"/>
<path d="M14 26 L36 22 L38 30 L16 34 Z" fill="#78c0f2"/><path d="M18 28 L32 25.5 L33 27.5 L19 30 Z" fill="#3a52b8"/>
<path d="M35 20 L44 19 L44 25 L36 26 Z" fill="#2a2a6a"/><path d="M42 22 L56 18 V28 L44 30 Z" fill="#c53d8a"/><path d="M44 23 L54 20 V23 L45 25 Z" fill="#e87ac0"/>
<path d="M0 26 L10 24 L14 37 H0 Z" fill="#5a1434"/><rect x="8" y="24" width="4" height="3" fill="#c03a6a"/>
<path d="M16 34 L36 30 L37 37 H16 Z" fill="#2c1e50"/><path d="M36 30 L50 28 L52 37 H37 Z" fill="#3a1a40"/><path d="M34 22 L37 37 H35 L32 24 Z" fill="#e070c8"/></g></g></svg>
<div class="t" style="left:432.80px;top:850px;font-size:15.84px;line-height:17px;font-weight:400;color:#0d0d0d;letter-spacing:0.755px;-webkit-text-stroke:0.75px #0d0d0d;">Electricity</div>
<div class="b" style="left:432.5px;top:873px;width:348.29999999999995px;height:11.299999999999955px;background:linear-gradient(180deg,#fbe9dc,#fadbe3);border-radius:6px;"></div>
<div class="b" style="left:432.5px;top:873px;width:164.5px;height:11.299999999999955px;background:linear-gradient(to bottom right,#f7b945,#f07a4a 50%,#e8416f);border-radius:6px;"></div>
<div class="t" style="left:799.50px;top:870px;font-size:15.99px;line-height:17px;letter-spacing:0.550px"><span style="color:#444444;font-weight:400;-webkit-text-stroke:0.35px #444444">36% </span><span style="color:#a9a9a9;font-weight:400">Correct</span></div>
<svg class="i" style="left:988px;top:695.5px" width="57.6" height="36" viewBox="0 0 57.6 36" preserveAspectRatio="none"><defs><clipPath id="cwash"><rect width="57.6" height="36" rx="6.5"/></clipPath><filter id="fwash" x="-5%" y="-5%" width="110%" height="110%"><feGaussianBlur stdDeviation="0.6"/></filter></defs><g clip-path="url(#cwash)"><g filter="url(#fwash)"><rect width="58" height="37" fill="#cbbfa3"/><rect x="44" y="0" width="14" height="37" fill="#c2b596"/>
<path d="M0 0 H37 L40 10 L38 20 L50 26 L48 37 H0 Z" fill="#2e6cc4"/>
<path d="M0 0 H20 L14 8 L0 12 Z" fill="#1f4f98"/><path d="M0 12 L10 10 L16 22 L12 37 H0 Z" fill="#3d88dc"/><path d="M20 18 L34 14 L38 26 L30 37 H18 Z" fill="#3479cf"/>
<path d="M34 0 L38 0 L40 14 L36 16 Z" fill="#2a5eb0"/>
<ellipse cx="19" cy="11.5" rx="9.5" ry="5.5" fill="#f0f0ee" transform="rotate(-32 19 11.5)"/><ellipse cx="15" cy="15" rx="3" ry="2" fill="#e8e2d2"/>
<ellipse cx="45.5" cy="24" rx="4.8" ry="6.8" fill="#f2f2f0" transform="rotate(15 45.5 24)"/>
<path d="M29 6 L44 22" stroke="#d8cfb8" stroke-width=".7"/></g></g></svg>
<div class="t" style="left:1064.70px;top:697px;font-size:15.84px;line-height:17px;font-weight:400;color:#0d0d0d;letter-spacing:0.383px;-webkit-text-stroke:0.75px #0d0d0d;">Green Washing</div>
<div class="b" style="left:1064px;top:724.7px;width:360.5999999999999px;height:11.100000000000023px;background:linear-gradient(90deg,#e6f8e2,#dcf8ec);border-radius:6px;"></div>
<div class="b" style="left:1064px;top:724.7px;width:291px;height:11.100000000000023px;background:linear-gradient(90deg,#96d95f,#6ee5a0);border-radius:6px;"></div>
<svg class="i" style="left:988px;top:771.8px" width="57.6" height="36" viewBox="0 0 57.6 36" preserveAspectRatio="none"><defs><clipPath id="ckeys"><rect width="57.6" height="36" rx="6.5"/></clipPath><filter id="fkeys" x="-5%" y="-5%" width="110%" height="110%"><feGaussianBlur stdDeviation="0.6"/></filter></defs><g clip-path="url(#ckeys)"><g filter="url(#fkeys)"><rect width="58" height="37" fill="#130e0e"/>
<path d="M22 0 H58 V12 L44 8 L28 4 Z" fill="#1a58b0"/><path d="M30 1 L58 5 V8 L34 3 Z" fill="#4a9cec"/>
<g fill="#a8644c">
<path d="M2 3 L7 2 L9 5 L4 6Z"/><path d="M9 2 L14 1.5 L16 4.5 L11 5Z"/><path d="M16 1.5 L21 1 L23 4 L18 4.5Z"/>
<path d="M1 8 L6 7 L8 10 L3 11Z"/><path d="M8 7 L13 6 L15 9 L10 10Z"/><path d="M15 6 L20 5.5 L22 8.5 L17 9Z"/><path d="M22 5.5 L27 5 L29 8 L24 8.5Z"/>
<path d="M3 13 L8 12 L10 15 L5 16Z"/><path d="M10 12 L15 11 L17 14 L12 15Z"/><path d="M17 11 L22 10 L24 13 L19 14Z"/><path d="M24 10 L29 9.5 L31 12.5 L26 13Z"/>
<path d="M0 18 L6 17 L8 20 L2 21Z"/><path d="M8 17 L13 16 L15 19 L10 20Z"/><path d="M15 16 L20 15 L22 18 L17 19Z"/><path d="M22 15 L28 14 L30 17 L24 18Z"/>
<path d="M14 22 L28 20 L31 25 L17 27Z"/><path d="M4 24 L12 23 L14 27 L6 28Z"/><path d="M17 29 L26 28 L28 32 L19 33Z"/>
<path d="M40 16 L54 18 L52 22 L38 20Z" fill="#6a4a40"/>
</g>
<path d="M30 18 L46 20 L44 26 L30 24 Z" fill="#1f2e34"/>
<g fill="#58b4f4"><circle cx="6" cy="4" r=".9"/><circle cx="19" cy="7" r="1"/><circle cx="27" cy="8" r="1"/><circle cx="33" cy="10" r="1"/><circle cx="41" cy="11" r=".9"/><circle cx="15" cy="15" r="1"/><circle cx="26" cy="17" r="1"/><circle cx="37" cy="18" r="1"/><circle cx="53" cy="16" r=".9"/><circle cx="3" cy="23" r="1"/><circle cx="10" cy="26" r="1"/><circle cx="18" cy="29" r="1.1"/><circle cx="27" cy="33" r="1.1"/><circle cx="43" cy="33" r="1.1"/><circle cx="50" cy="22" r="1"/><circle cx="56" cy="25" r=".9"/></g></g></g></svg>
<div class="t" style="left:1068.00px;top:773px;font-size:15.84px;line-height:17px;font-weight:400;color:#0d0d0d;letter-spacing:0.607px;-webkit-text-stroke:0.75px #0d0d0d;">Security Basics</div>
<div class="b" style="left:1064px;top:796.8px;width:360.5999999999999px;height:11.100000000000023px;background:linear-gradient(90deg,#e6f8e2,#dcf8ec);border-radius:6px;"></div>
<div class="b" style="left:1064px;top:796.8px;width:208px;height:11.100000000000023px;background:linear-gradient(90deg,#96d95f,#6ee5a0);border-radius:6px;"></div>
<svg class="i" style="left:988px;top:848px" width="57.6" height="36" viewBox="0 0 57.6 36" preserveAspectRatio="none"><defs><clipPath id="cmedia"><rect width="57.6" height="36" rx="6.5"/></clipPath><filter id="fmedia" x="-5%" y="-5%" width="110%" height="110%"><feGaussianBlur stdDeviation="0.6"/></filter></defs><g clip-path="url(#cmedia)"><g filter="url(#fmedia)"><rect width="58" height="37" fill="#e6ddd2"/>
<rect x="0" y="0" width="58" height="6" fill="#efe9e2"/>
<path d="M0 6 L8 4 L10 24 L0 26 Z" fill="#7a4e3e"/><path d="M10 2 L16 1 L18 16 L10 18 Z" fill="#2e2420"/><circle cx="13" cy="3" r="2.5" fill="#3a2a22"/>
<path d="M24 4 L30 2 L32 14 L24 14 Z" fill="#8a7068"/><circle cx="30" cy="3.5" r="2.3" fill="#5a4038"/>
<path d="M36 2 L46 2 L48 14 L38 16 Z" fill="#3a3430"/><circle cx="41" cy="2.5" r="2.5" fill="#4a3a32"/>
<path d="M48 6 L58 4 V37 H50 L48 20 Z" fill="#2a2424"/><circle cx="54" cy="5" r="2.2" fill="#6a4a40"/>
<path d="M10 16 L18 14 L18 24 L10 26 Z" fill="#3a2e2a"/>
<rect x="18.5" y="12" width="12.5" height="9" fill="#262a34"/><rect x="19.5" y="13" width="10.5" height="7" fill="#b5cdea"/>
<path d="M34 8 L40 8 L40 18 L34 18 Z" fill="#dfe6dc"/>
<path d="M0 26 L18 24 L30 28 L34 37 H0 Z" fill="#eadfd4"/><rect x="5" y="30" width="3" height="4" fill="#221c1c"/><ellipse cx="21" cy="34" rx="2.5" ry="1.5" fill="#c05040"/>
<path d="M32 22 L44 20 L46 33 L33 35 Z" fill="#4a4244"/><path d="M36 18 L46 16 L48 22 L38 22 Z" fill="#6a5a50"/>
<path d="M28 34 L36 32 L38 37 H28 Z" fill="#2a2020"/><ellipse cx="46" cy="30" rx="3" ry="2.5" fill="#d8b090"/></g></g></svg>
<div class="t" style="left:1068.00px;top:849px;font-size:15.84px;line-height:17px;font-weight:400;color:#0d0d0d;letter-spacing:0.481px;-webkit-text-stroke:0.75px #0d0d0d;">Media Policies</div>
<div class="b" style="left:1064px;top:872.8px;width:360.5999999999999px;height:11.100000000000023px;background:linear-gradient(90deg,#e6f8e2,#dcf8ec);border-radius:6px;"></div>
<div class="b" style="left:1064px;top:872.8px;width:170.79999999999995px;height:11.100000000000023px;background:linear-gradient(90deg,#96d95f,#6ee5a0);border-radius:6px;"></div>
</body></html>
